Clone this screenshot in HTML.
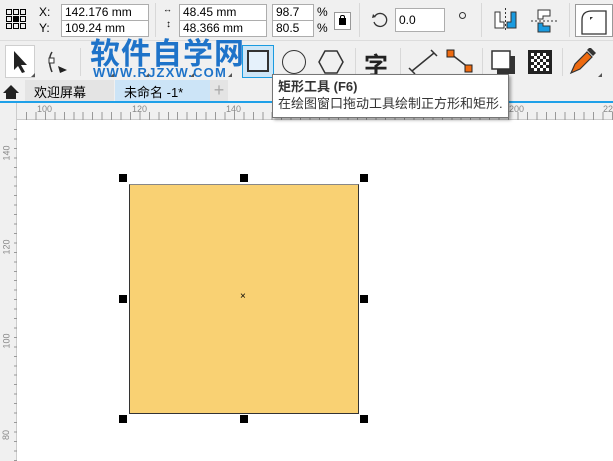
<!DOCTYPE html>
<html><head><meta charset="utf-8"><style>
*{margin:0;padding:0;box-sizing:border-box}
body{width:613px;height:461px;overflow:hidden;background:#fff;font-family:"Liberation Sans","Noto Sans CJK SC",sans-serif;position:relative}
.a{position:absolute}
.inp{position:absolute;background:#fff;border:1px solid #adadad;font-size:12px;line-height:14px;padding-left:3px;color:#000}
.sep{position:absolute;width:1px;background:#d8d8d8}
.lbl{position:absolute;font-size:12px}
.tri{position:absolute;width:0;height:0;border-left:4px solid transparent;border-bottom:4px solid #555}
</style></head><body>
<div class="a" style="left:0;top:0;width:613px;height:80px;background:#f0f0f0"></div>
<div class="a" style="left:0;top:40px;width:613px;height:1px;background:#dcdcdc"></div>
<svg class="a" style="left:5px;top:8px" width="22" height="22" viewBox="0 0 22 22"><g fill="none" stroke="#000" stroke-width="1"><rect x="1.5" y="1.5" width="5" height="5"/><rect x="8.5" y="1.5" width="5" height="5"/><rect x="15.5" y="1.5" width="5" height="5"/><rect x="1.5" y="8.5" width="5" height="5"/><rect x="15.5" y="8.5" width="5" height="5"/><rect x="1.5" y="15.5" width="5" height="5"/><rect x="8.5" y="15.5" width="5" height="5"/><rect x="15.5" y="15.5" width="5" height="5"/></g><rect x="8" y="8" width="6" height="6"/></svg>
<div class="lbl" style="left:39px;top:5px">X:</div>
<div class="lbl" style="left:39px;top:21px">Y:</div>
<div class="inp" style="left:61px;top:4px;width:88px;height:17px">142.176 mm</div>
<div class="inp" style="left:61px;top:20px;width:88px;height:17px">109.24 mm</div>
<div class="sep" style="left:155px;top:3px;height:34px"></div>
<div class="lbl" style="left:163px;top:4px;font-size:9px">↔</div>
<div class="lbl" style="left:166px;top:19px;font-size:10px">↕</div>
<div class="inp" style="left:179px;top:4px;width:88px;height:17px">48.45 mm</div>
<div class="inp" style="left:179px;top:20px;width:88px;height:17px">48.366 mm</div>
<div class="inp" style="left:272px;top:4px;width:42px;height:17px">98.7</div>
<div class="inp" style="left:272px;top:20px;width:42px;height:17px">80.5</div>
<div class="lbl" style="left:317px;top:5px">%</div>
<div class="lbl" style="left:317px;top:21px">%</div>
<div class="a" style="left:334px;top:12px;width:17px;height:18px;background:#fff;border:1px solid #999"></div>
<div class="a" style="left:339px;top:18px;width:7px;height:7px;background:#000"></div>
<div class="a" style="left:340px;top:15px;width:5px;height:5px;border:1px solid #000;border-bottom:none;border-radius:2px 2px 0 0"></div>
<div class="sep" style="left:359px;top:3px;height:34px"></div>
<svg class="a" style="left:371px;top:11px" width="18" height="18"><path d="M4 5 A6.5 6.5 0 1 1 3 11" fill="none" stroke="#333" stroke-width="1.3"/><path d="M2 3 L5 6 L1 7Z" fill="#333"/></svg>
<div class="inp" style="left:395px;top:8px;width:50px;height:24px;line-height:22px">0.0</div>
<div class="a" style="left:459px;top:12px;width:7px;height:7px;border:1px solid #333;border-radius:50%"></div>
<div class="sep" style="left:481px;top:3px;height:34px"></div>
<svg class="a" style="left:493px;top:8px" width="26" height="24"><path d="M2 4h5v10h4v6H2z" fill="#fff" stroke="#333"/><path d="M18 4h5v16h-9v-6h4z" fill="#1a9be0" stroke="#333"/><path d="M12.5 0v24" stroke="#333" stroke-dasharray="2 2"/></svg>
<svg class="a" style="left:530px;top:8px" width="28" height="26"><path d="M8 2h12v6H13v3H8z" fill="#fff" stroke="#333"/><path d="M8 15h5v3h7v6H8z" fill="#1a9be0" stroke="#333"/><path d="M1 13h26" stroke="#333" stroke-dasharray="2 2"/></svg>
<div class="sep" style="left:569px;top:3px;height:34px"></div>
<div class="a" style="left:575px;top:4px;width:38px;height:33px;background:#fff;border:1px solid #999"></div>
<svg class="a" style="left:580px;top:8px" width="30" height="28"><path d="M2 26V12Q2 3 12 3h14v23z" fill="#fff" stroke="#333" stroke-width="1.3"/><path d="M10 9l3 0-3 3z" fill="#333"/></svg>

<div class="a" style="left:5px;top:45px;width:30px;height:33px;background:#fff;border:1px solid #cfcfcf"></div>
<svg class="a" style="left:12px;top:50px" width="16" height="24"><path d="M2 1v19l4-4 4 7 3-1-4-7h6z" fill="#222"/></svg>
<div class="tri" style="left:31px;top:73px"></div>
<svg class="a" style="left:44px;top:50px" width="28" height="26"><path d="M8 2Q3 10 8 22" fill="none" stroke="#333" stroke-width="1.5"/><rect x="5" y="8" width="5" height="5" fill="#fff" stroke="#333"/><path d="M14 16l9 4-7 3z" fill="#222"/></svg>
<div class="sep" style="left:80px;top:48px;height:28px"></div>
<div class="tri" style="left:110px;top:73px"></div><div class="tri" style="left:145px;top:73px"></div><div class="tri" style="left:190px;top:73px"></div><div class="tri" style="left:228px;top:73px"></div>
<div class="a" style="left:242px;top:45px;width:32px;height:33px;background:#cde6f7;border:1px solid #1a9be0"></div>
<div class="a" style="left:247px;top:50px;width:22px;height:22px;background:#e5f1fb;border:2px solid #333"></div>
<div class="a" style="left:282px;top:50px;width:24px;height:24px;border:1.5px solid #333;border-radius:50%"></div>
<svg class="a" style="left:318px;top:49px" width="26" height="26"><path d="M7 2h12l6 11-6 11H7L1 13z" fill="none" stroke="#333" stroke-width="1.5"/></svg>
<div class="sep" style="left:355px;top:48px;height:28px"></div>
<div class="lbl" style="left:364px;top:46px;font-size:24px;font-weight:bold;color:#222">字</div>
<div class="sep" style="left:400px;top:48px;height:28px"></div>
<svg class="a" style="left:408px;top:49px" width="30" height="26"><path d="M4 22L26 4M1 19l6 6M23 1l6 6" stroke="#333" stroke-width="1.5"/></svg>
<svg class="a" style="left:445px;top:48px" width="30" height="28"><path d="M6 6L24 20" stroke="#333" stroke-width="1.5"/><rect x="2" y="2" width="7" height="7" fill="#ee6a10" stroke="#222"/><rect x="20" y="17" width="7" height="7" fill="#ee6a10" stroke="#222"/></svg>
<div class="sep" style="left:482px;top:48px;height:28px"></div>
<svg class="a" style="left:490px;top:49px" width="28" height="28"><rect x="7" y="7" width="18" height="18" fill="#333"/><rect x="2" y="2" width="18" height="18" fill="#fff" stroke="#333" stroke-width="1.5"/></svg>
<svg class="a" style="left:528px;top:50px" width="24" height="24"><rect width="24" height="24" fill="#222"/><g fill="#fff"><rect x="3" y="3" width="3" height="3"/><rect x="9" y="3" width="3" height="3"/><rect x="15" y="3" width="3" height="3"/><rect x="6" y="6" width="3" height="3"/><rect x="12" y="6" width="3" height="3"/><rect x="18" y="6" width="3" height="3"/><rect x="3" y="9" width="3" height="3"/><rect x="9" y="9" width="3" height="3"/><rect x="15" y="9" width="3" height="3"/><rect x="6" y="12" width="3" height="3"/><rect x="12" y="12" width="3" height="3"/><rect x="18" y="12" width="3" height="3"/><rect x="3" y="15" width="3" height="3"/><rect x="9" y="15" width="3" height="3"/><rect x="15" y="15" width="3" height="3"/><rect x="6" y="18" width="3" height="3"/><rect x="12" y="18" width="3" height="3"/><rect x="18" y="18" width="3" height="3"/></g></svg>
<div class="sep" style="left:562px;top:48px;height:28px"></div>
<svg class="a" style="left:568px;top:48px" width="30" height="28"><path d="M3 25l4-9 12-12 5 5-12 12z" fill="#ee6a10" stroke="#333" stroke-width="1.2"/><path d="M19 2l6 6 3-3-6-6z" fill="#333"/></svg>
<div class="tri" style="left:598px;top:73px"></div>

<div class="a" style="left:90px;top:34px;font-size:30px;font-weight:bold;color:#1e73c9;letter-spacing:1px;font-family:'Noto Sans CJK SC',sans-serif;line-height:34px">软件自学网</div>
<div class="a" style="left:93px;top:65px;font-size:13px;font-weight:bold;color:#1e73c9;letter-spacing:1.2px">WWW.RJZXW.COM</div>

<div class="a" style="left:0;top:80px;width:613px;height:22px;background:#f0f0f0"></div>
<svg class="a" style="left:2px;top:84px" width="18" height="16"><path d="M9 1L1 9h3v6h10V9h3z" fill="#222"/></svg>
<div class="a" style="left:25px;top:80px;width:89px;height:21px;background:#e4e4e4"></div>
<div class="lbl" style="left:34px;top:82px;font-size:13px">欢迎屏幕</div>
<div class="a" style="left:115px;top:80px;width:95px;height:21px;background:#cce4f7"></div>
<div class="lbl" style="left:124px;top:82px;font-size:13px">未命名 -1*</div>
<div class="a" style="left:210px;top:80px;width:18px;height:21px;background:#e4e4e4;color:#aaa;font-size:18px;text-align:center;line-height:20px">+</div>
<div class="a" style="left:0;top:101px;width:613px;height:2px;background:#1ea0e8"></div>
<div class="a" style="left:0;top:103px;width:613px;height:17px;background:#f0f0f0;border-bottom:1px solid #ccc"></div>
<div class="a" style="left:0;top:103px;width:17px;height:358px;background:#f0f0f0;border-right:1px solid #ccc"></div>
<div class="lbl" style="left:37px;top:104px;font-size:9px;color:#888">100</div>
<div class="lbl" style="left:132px;top:104px;font-size:9px;color:#888">120</div>
<div class="lbl" style="left:226px;top:104px;font-size:9px;color:#888">140</div>
<div class="lbl" style="left:509px;top:104px;font-size:9px;color:#888">200</div>
<div class="lbl" style="left:603px;top:104px;font-size:9px;color:#888">220</div>
<div class="a" style="left:18px;top:112px;width:595px;height:8px;background:repeating-linear-gradient(90deg,transparent 0 8px,#999 8px 9px,transparent 9px 9.45px)"></div>
<div class="lbl" style="left:-1px;top:148px;font-size:9px;color:#888;transform:rotate(-90deg)">140</div>
<div class="lbl" style="left:-1px;top:242px;font-size:9px;color:#888;transform:rotate(-90deg)">120</div>
<div class="lbl" style="left:-1px;top:336px;font-size:9px;color:#888;transform:rotate(-90deg)">100</div>
<div class="lbl" style="left:1px;top:430px;font-size:9px;color:#888;transform:rotate(-90deg)">80</div>
<div class="a" style="left:14px;top:121px;width:3px;height:340px;background:repeating-linear-gradient(180deg,transparent 0 8px,#999 8px 9px,transparent 9px 9.45px)"></div>

<div class="a" style="left:129px;top:184px;width:230px;height:230px;background:#f9d173;border:1px solid #333;border-top-color:#888"></div>
<div class="lbl" style="left:240px;top:291px;font-size:10px">×</div>
<div class="a" style="left:119px;top:174px;width:8px;height:8px;background:#000"></div>
<div class="a" style="left:240px;top:174px;width:8px;height:8px;background:#000"></div>
<div class="a" style="left:360px;top:174px;width:8px;height:8px;background:#000"></div>
<div class="a" style="left:119px;top:295px;width:8px;height:8px;background:#000"></div>
<div class="a" style="left:360px;top:295px;width:8px;height:8px;background:#000"></div>
<div class="a" style="left:119px;top:415px;width:8px;height:8px;background:#000"></div>
<div class="a" style="left:240px;top:415px;width:8px;height:8px;background:#000"></div>
<div class="a" style="left:360px;top:415px;width:8px;height:8px;background:#000"></div>

<div class="a" style="left:272px;top:74px;width:237px;height:44px;background:#fff;border:1px solid #767676;box-shadow:2px 2px 3px rgba(0,0,0,.35);padding:3px 0 0 5px;font-size:13px;line-height:17px;color:#333;white-space:nowrap"><b>矩形工具 (F6)</b><br>在绘图窗口拖动工具绘制正方形和矩形.</div>
</body></html>
